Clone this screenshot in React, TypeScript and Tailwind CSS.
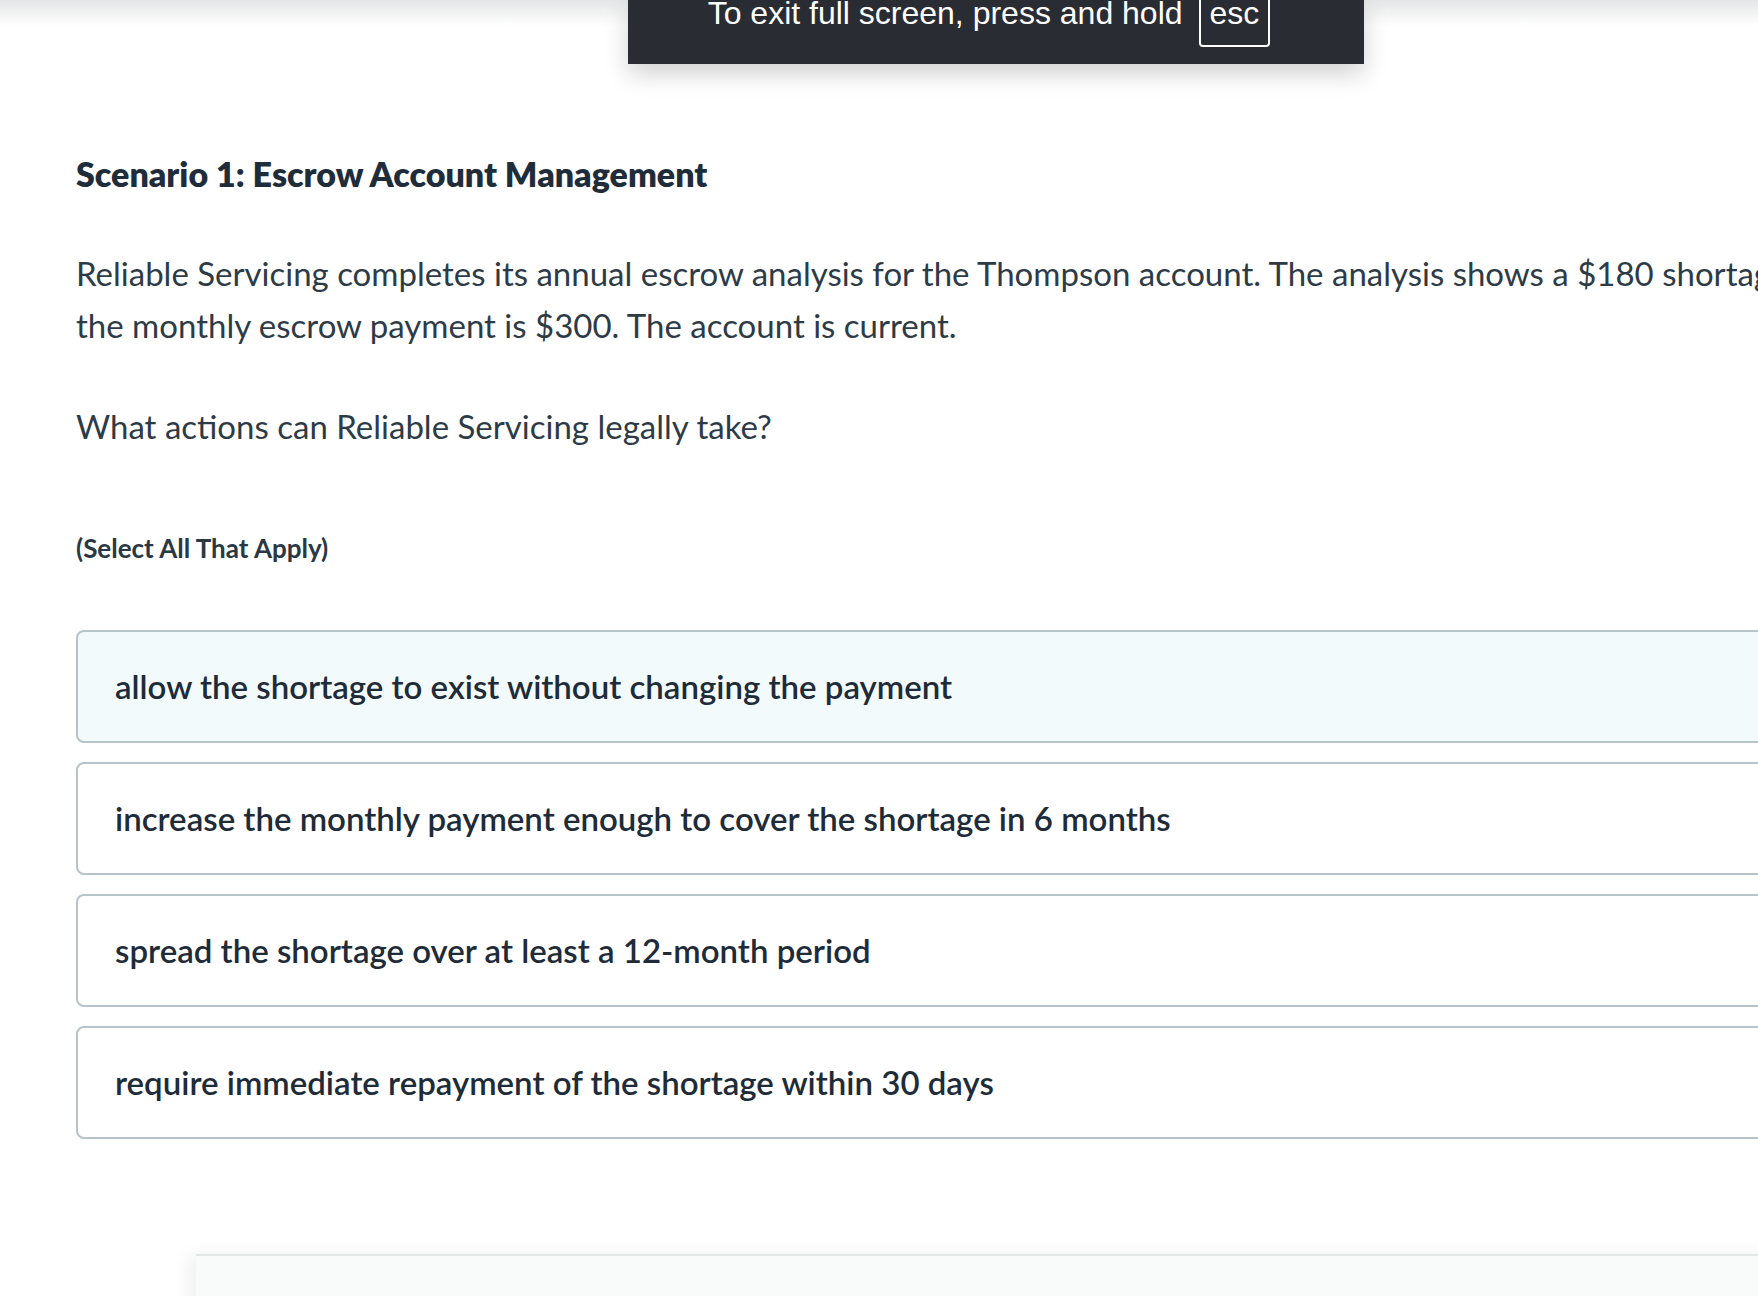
const OPTIONS = [
  'allow the shortage to exist without changing the payment',
  'increase the monthly payment enough to cover the shortage in 6 months',
  'spread the shortage over at least a 12-month period',
  'require immediate repayment of the shortage within 30 days',
]

export default function App() {
  return (
    <div className="relative w-[1758px] h-[1296px] overflow-hidden bg-white font-['Lato',sans-serif] text-[#1f2d3a]">
      {/* top edge shade */}
      <div className="absolute top-0 left-0 right-0 h-[26px] bg-gradient-to-b from-[#e4e5e6] to-white pointer-events-none" />

      <div className="w-[2300px] pl-[76px] pt-[156px]">
        <h2 className="text-[34px] leading-[36px] font-extrabold text-[#1f2d3a]">
          Scenario 1: Escrow Account Management
        </h2>

        <p className="mt-[55px] text-[33px] leading-[52px] text-[#2d3b47] whitespace-nowrap">
          Reliable Servicing completes its annual escrow analysis for the Thompson account. The analysis shows a $180 shortage, and
          <br />
          the monthly escrow payment is $300. The account is current.
        </p>

        <p className="mt-[49px] text-[33px] leading-[52px] text-[#2d3b47]">
          What actions can Reliable Servicing legally take?
        </p>

        <p className="mt-[82px] text-[26px] leading-[28px] font-bold text-[#2a3844]">
          (Select All That Apply)
        </p>

        <div className="mt-[68px] flex flex-col gap-[19px] w-[2000px]">
          {OPTIONS.map((opt, i) => (
            <div
              key={i}
              className={`h-[113px] flex items-center pl-[37px] rounded-[8px] border-2 border-[#b6c3c8] ${
                i === 0 ? 'bg-[#f2fafc]' : 'bg-white'
              }`}
            >
              <span className="text-[33px] font-semibold text-[#1e2b38]">{opt}</span>
            </div>
          ))}
        </div>

        <div className="mt-[115px] ml-[120px] h-[60px] bg-[#f9fafa] border-t-2 border-[#e2e6e6] shadow-[-8px_0_16px_rgba(0,0,0,0.06)]" />
      </div>

      {/* full screen notice */}
      <div className="absolute top-0 left-[628px] w-[736px] h-[64px] pr-[14px] bg-[#2a2c33] shadow-[0_10px_24px_rgba(0,0,0,0.18)] flex items-start justify-center gap-[16px] font-['Liberation_Sans',Arial,sans-serif] text-white">
        <span className="text-[32px] leading-[26px]">To exit full screen, press and hold</span>
        <span className="-mt-[12px] h-[59px] px-[9px] pt-[7px] border-2 border-white rounded-[4px] text-[32px] leading-[32px]">
          esc
        </span>
      </div>
    </div>
  )
}
